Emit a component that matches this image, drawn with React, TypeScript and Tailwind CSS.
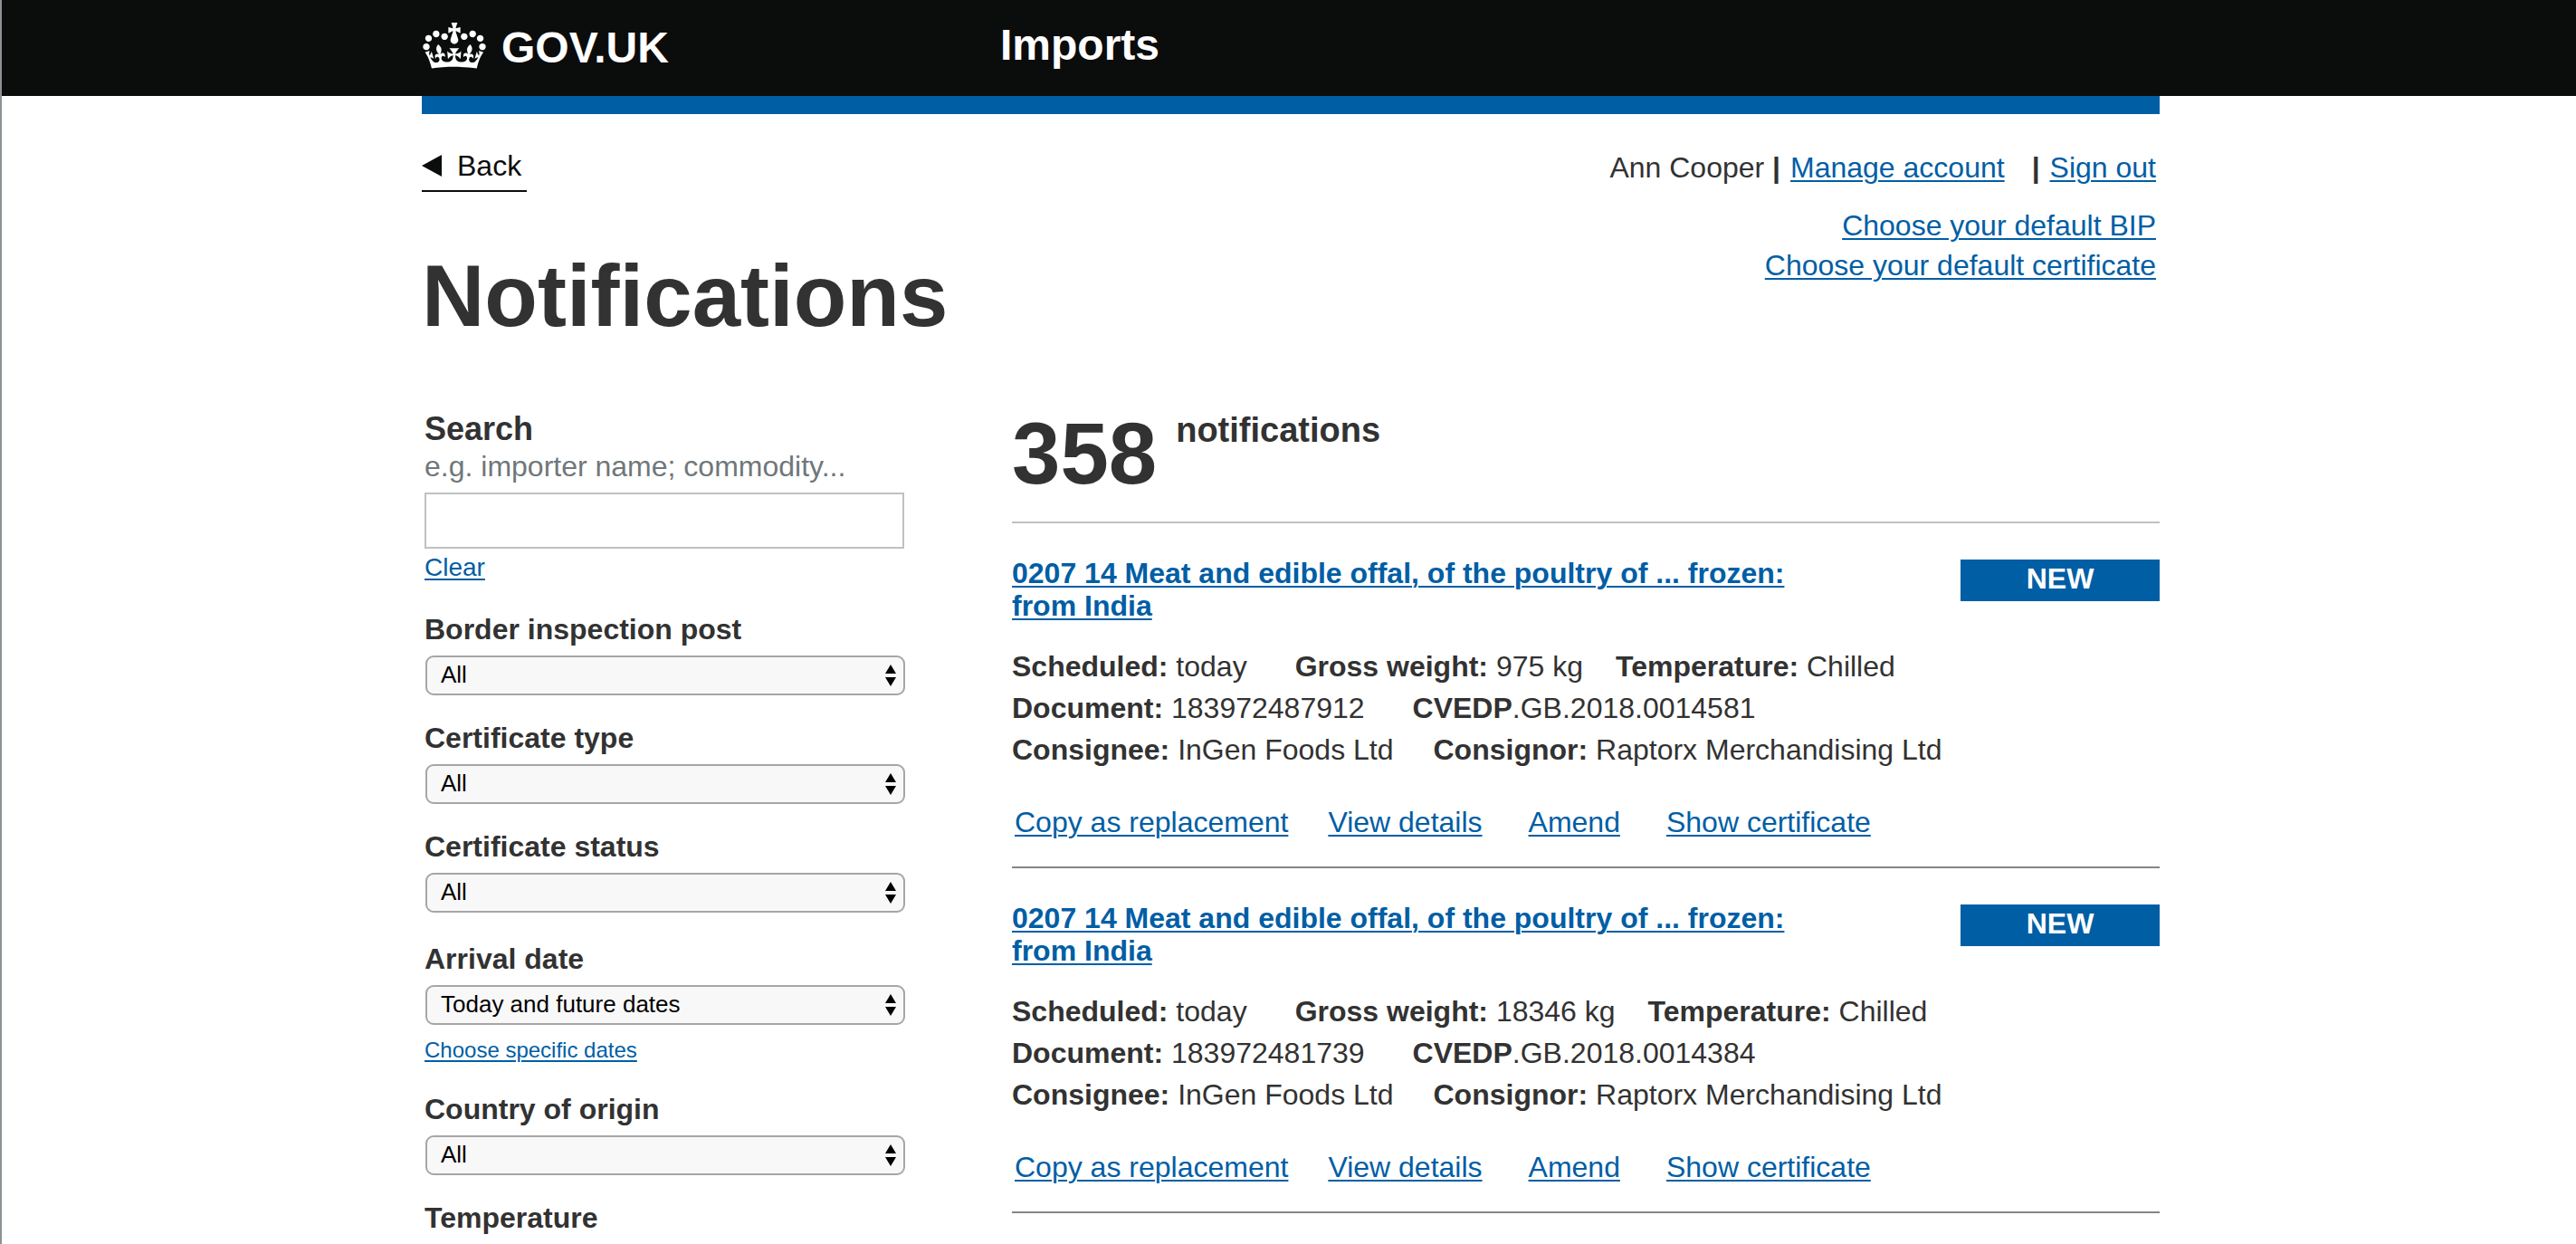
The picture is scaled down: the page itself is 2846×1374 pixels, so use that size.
import React from "react";

const LINK = "text-[#005ea5] underline decoration-2 underline-offset-[3px]";

type Notice = {
  id: string;
  title: string;
  rows: { label: string; value: string; gap: string }[][];
};

const notices: Notice[] = [
  {
    id: "183972487912",
    title: "0207 14 Meat and edible offal, of the poultry of ... frozen: from India",
    rows: [
      [
        { label: "Scheduled:", value: " today", gap: "" },
        { label: "Gross weight:", value: " 975 kg", gap: "ml-[53px]" },
        { label: "Temperature:", value: " Chilled", gap: "ml-9" },
      ],
      [
        { label: "Document:", value: " 183972487912", gap: "" },
        { label: "CVEDP", value: ".GB.2018.0014581", gap: "ml-[53px]" },
      ],
      [
        { label: "Consignee:", value: " InGen Foods Ltd", gap: "" },
        { label: "Consignor:", value: " Raptorx Merchandising Ltd", gap: "ml-11" },
      ],
    ],
  },
  {
    id: "183972481739",
    title: "0207 14 Meat and edible offal, of the poultry of ... frozen: from India",
    rows: [
      [
        { label: "Scheduled:", value: " today", gap: "" },
        { label: "Gross weight:", value: " 18346 kg", gap: "ml-[53px]" },
        { label: "Temperature:", value: " Chilled", gap: "ml-9" },
      ],
      [
        { label: "Document:", value: " 183972481739", gap: "" },
        { label: "CVEDP", value: ".GB.2018.0014384", gap: "ml-[53px]" },
      ],
      [
        { label: "Consignee:", value: " InGen Foods Ltd", gap: "" },
        { label: "Consignor:", value: " Raptorx Merchandising Ltd", gap: "ml-11" },
      ],
    ],
  },
];

function Crown() {
  return (
    <svg viewBox="0 0 132 97" className="h-[51px] w-[70px]" fill="currentColor" aria-hidden="true">
      <path d="M25 30.2c3.5 1.5 7.7-.2 9.1-3.7 1.5-3.6-.2-7.8-3.9-9.2-3.6-1.4-7.6.3-9.1 3.9-1.4 3.5.3 7.5 3.9 9zM9 39.5c3.6 1.5 7.8-.2 9.2-3.7 1.5-3.6-.2-7.8-3.9-9.1-3.6-1.5-7.6.2-9.1 3.8-1.4 3.5.3 7.5 3.8 9zM4.4 57.2c3.5 1.5 7.7-.2 9.1-3.8 1.5-3.6-.2-7.7-3.9-9.1-3.5-1.5-7.6.3-9.1 3.8-1.4 3.5.3 7.6 3.9 9.1zm38.3-21.4c3.5 1.5 7.7-.2 9.1-3.8 1.5-3.6-.2-7.7-3.9-9.1-3.6-1.5-7.6.3-9.1 3.8-1.3 3.6.4 7.7 3.9 9.1zm64.4-5.6c-3.6 1.5-7.8-.2-9.1-3.7-1.5-3.6.2-7.8 3.8-9.2 3.6-1.4 7.7.3 9.2 3.9 1.3 3.5-.4 7.5-3.9 9zm15.9 9.3c-3.6 1.5-7.7-.2-9.1-3.7-1.5-3.6.2-7.8 3.7-9.1 3.6-1.5 7.7.2 9.2 3.8 1.5 3.5-.3 7.5-3.8 9zm4.7 17.7c-3.6 1.5-7.8-.2-9.2-3.8-1.5-3.6.2-7.7 3.9-9.1 3.6-1.5 7.7.3 9.2 3.8 1.3 3.5-.4 7.6-3.9 9.1zM89.3 35.8c-3.6 1.5-7.8-.2-9.2-3.8-1.4-3.6.2-7.7 3.9-9.1 3.6-1.5 7.7.3 9.2 3.8 1.4 3.6-.3 7.7-3.9 9.1zM69.7 17.7l8.9 4.7V9.3l-8.9 2.8c-.2-.3-.5-.6-.9-.9L72.4 0H59.6l3.5 11.2c-.3.3-.6.5-.9.9l-8.8-2.8v13.1l8.8-4.7c.3.3.6.7.9.9l-5 15.4v.1c-.2.8-.4 1.6-.4 2.4 0 4.1 3.1 7.5 7 8.1h.2c.3 0 .7.1 1 .1.4 0 .7 0 1-.1h.2c4-.6 7.1-4.1 7.1-8.1 0-.8-.1-1.7-.4-2.4V34l-5.1-15.4c.4-.2.7-.6 1-.9zM66 92.8c16.9 0 32.8 1.1 47.1 3.2 4-16.9 8.9-26.7 14-33.5l-9.6-3.4c1 4.9 1.1 7.2 0 10.2-1.5-1.4-3-4.3-4.2-8.7L108.6 76c2.8-2 5-3.2 7.5-3.3-4.4 9.4-10 11.9-13.6 11.2-4.3-.8-6.3-4.6-5.6-7.9 1-4.7 5.7-5.9 8-.5 4.3-8.7-3-11.4-7.6-8.8 7.1-7.2 7.9-13.5 2.1-21.1-8 6.1-8.1 12.3-4.5 20.8-4.7-5.4-12.1-2.5-9.5 6.2 3.4-5.2 7.9-2 7.2 3.1-.6 4.3-6.4 7.8-13.5 7.2-10.3-.9-10.9-8-11.2-13.8 2.5-.5 7.1 1.8 11 7.3L80.2 60c-4.1 4.4-8 5.3-12.3 5.4 1.4-4.4 8-11.6 8-11.6H55.5s6.4 7.2 7.9 11.6c-4.2-.1-8-1-12.3-5.4l1.4 16.4c3.9-5.5 8.5-7.7 10.9-7.3-.3 5.8-.9 12.8-11.1 13.8-7.2.6-12.9-2.9-13.5-7.2-.7-5 3.8-8.3 7.1-3.1 2.7-8.7-4.6-11.6-9.4-6.2 3.7-8.5 3.6-14.7-4.6-20.8-5.8 7.6-5 13.9 2.2 21.1-4.7-2.6-11.9.1-7.7 8.8 2.3-5.5 7.1-4.2 8.1.5.7 3.3-1.3 7.1-5.7 7.9-3.5.7-9-1.8-13.5-11.2 2.5.1 4.7 1.3 7.5 3.3l-4.7-15.4c-1.2 4.4-2.7 7.2-4.3 8.7-1.1-3-.9-5.3 0-10.2l-9.5 3.4c5 6.9 9.9 16.7 14 33.5 14.8-2.1 30.8-3.2 47.7-3.2z" />
    </svg>
  );
}

function SelectField({ id, label, value, className }: { id: string; label: string; value: string; className: string }) {
  return (
    <div className={className}>
      <label htmlFor={id} className="block text-[32px] leading-9 font-bold">
        {label}
      </label>
      <div className="relative mt-[11px] pl-px">
        <select
          id={id}
          defaultValue={value}
          className="block h-11 w-full appearance-none rounded-[9px] border-2 border-[#a6a6a6] bg-[#f8f8f8] pb-0.5 pl-[15px] text-[26px] text-black"
        >
          <option>{value}</option>
        </select>
        <svg
          viewBox="0 0 12 24"
          className="pointer-events-none absolute top-2.5 right-2.5 h-6 w-3"
          fill="#000"
          aria-hidden="true"
        >
          <path d="M6 0l6 10H0zM6 24l6-10H0z" />
        </svg>
      </div>
    </div>
  );
}

function NoticeCard({ notice }: { notice: Notice }) {
  return (
    <article className="border-b-2 border-[#858687] pt-[37px] pb-[29px]">
      <div className="flex items-start justify-between">
        <h2 className="max-w-[900px] text-[32px] leading-9 font-bold">
          <a href="#" className={LINK}>
            {notice.title}
          </a>
        </h2>
        <strong className="mt-[3px] w-[220px] bg-[#005ea5] pb-1 text-center text-[32px] leading-[42px] text-white">
          NEW
        </strong>
      </div>
      <div className="mt-[26px] text-[32px] leading-[46px]">
        {notice.rows.map((row, i) => (
          <p key={i} className="flex whitespace-pre">
            {row.map((item) => (
              <span key={item.label} className={item.gap}>
                <b>{item.label}</b>
                {item.value}
              </span>
            ))}
          </p>
        ))}
      </div>
      <nav className="mt-[37px] flex pl-[3px] text-[32px] leading-10" aria-label={"Actions for " + notice.id}>
        <a href="#" className={LINK}>Copy as replacement</a>
        <a href="#" className={LINK + " ml-11"}>View details</a>
        <a href="#" className={LINK + " ml-[51px]"}>Amend</a>
        <a href="#" className={LINK + " ml-[51px]"}>Show certificate</a>
      </nav>
    </article>
  );
}

export default function App() {
  return (
    <div className="min-h-screen border-l-2 border-[#8b9296] bg-white font-['Liberation_Sans',Arial,sans-serif] text-[#323232]">
      <header className="bg-[#0b0c0c] pl-1 text-white">
        <div className="mx-auto flex h-[106px] max-w-[1920px] items-start">
          <a href="#" className="flex w-[639px] items-start gap-[17px] pt-[25px] pl-px">
            <Crown />
            <span className="text-[48px] leading-[56px] font-bold">GOV.UK</span>
          </a>
          <span className="pt-[22px] text-[48px] leading-[56px] font-bold">Imports</span>
        </div>
      </header>

      <div className="pl-1">
        <div className="mx-auto max-w-[1920px] border-t-[20px] border-[#005ea5]">
          <div className="flex items-start justify-between">
            <div className="pt-[39px]">
              <a
                href="#"
                className="inline-flex items-center gap-[17px] border-b-2 border-[#0b0c0c] pr-1.5 pb-[9px] text-[32px] leading-9 text-[#0b0c0c]"
              >
                <svg viewBox="0 0 22 24" className="h-6 w-[22px]" fill="currentColor" aria-hidden="true">
                  <path d="M0 12L22 0v24z" />
                </svg>
                Back
              </a>
              <h1 className="mt-[67px] text-[96px] leading-[96px] font-bold">Notifications</h1>
            </div>
            <div className="pt-[41px] pr-1 text-right text-[32px]">
              <div className="flex justify-end leading-9">
                <span>
                  Ann Cooper <b>|</b>
                </span>
                <a href="#" className={LINK + " ml-[11px]"}>Manage account</a>
                <b className="ml-[30px]">|</b>
                <a href="#" className={LINK + " ml-[11px]"}>Sign out</a>
              </div>
              <div className="mt-6 flex flex-col items-end leading-[44px]">
                <a href="#" className={LINK}>Choose your default BIP</a>
                <a href="#" className={LINK}>Choose your default certificate</a>
              </div>
            </div>
          </div>

          <div className="mt-[78px] flex items-start gap-[118px]">
            <form className="w-[534px] shrink-0 pl-[3px]">
              <label htmlFor="search" className="block text-[36px] leading-[42px] font-bold">
                Search
              </label>
              <p id="search-hint" className="text-[32px] leading-10 text-[#6f777b]">
                e.g. importer name; commodity...
              </p>
              <input
                id="search"
                type="text"
                aria-describedby="search-hint"
                className="mt-[9px] block h-[62px] w-[530px] border-2 border-[#bfc1c3] px-3 text-[32px]"
              />
              <a href="#" className={LINK + " mt-[5px] block w-fit text-[28px] leading-8"}>Clear</a>

              <SelectField id="bip" label="Border inspection post" value="All" className="mt-[34px]" />
              <SelectField id="type" label="Certificate type" value="All" className="mt-[29px]" />
              <SelectField id="status" label="Certificate status" value="All" className="mt-[29px]" />
              <SelectField id="arrival" label="Arrival date" value="Today and future dates" className="mt-[33px]" />
              <a href="#" className={LINK + " mt-3.5 block w-fit text-[24px] leading-7"}>Choose specific dates</a>
              <SelectField id="country" label="Country of origin" value="All" className="mt-[33px]" />
              <h2 className="mt-[29px] text-[32px] leading-9 font-bold">Temperature</h2>
            </form>

            <main className="min-w-0 flex-1">
              <p className="flex items-start gap-[21px] border-b-2 border-[#bfc1c3] pb-[27px] font-bold">
                <span className="text-[96px] leading-[96px]">358</span>
                <span className="text-[38px] leading-[44px]">notifications</span>
              </p>
              {notices.map((notice) => (
                <NoticeCard key={notice.id} notice={notice} />
              ))}
            </main>
          </div>
        </div>
      </div>
    </div>
  );
}
